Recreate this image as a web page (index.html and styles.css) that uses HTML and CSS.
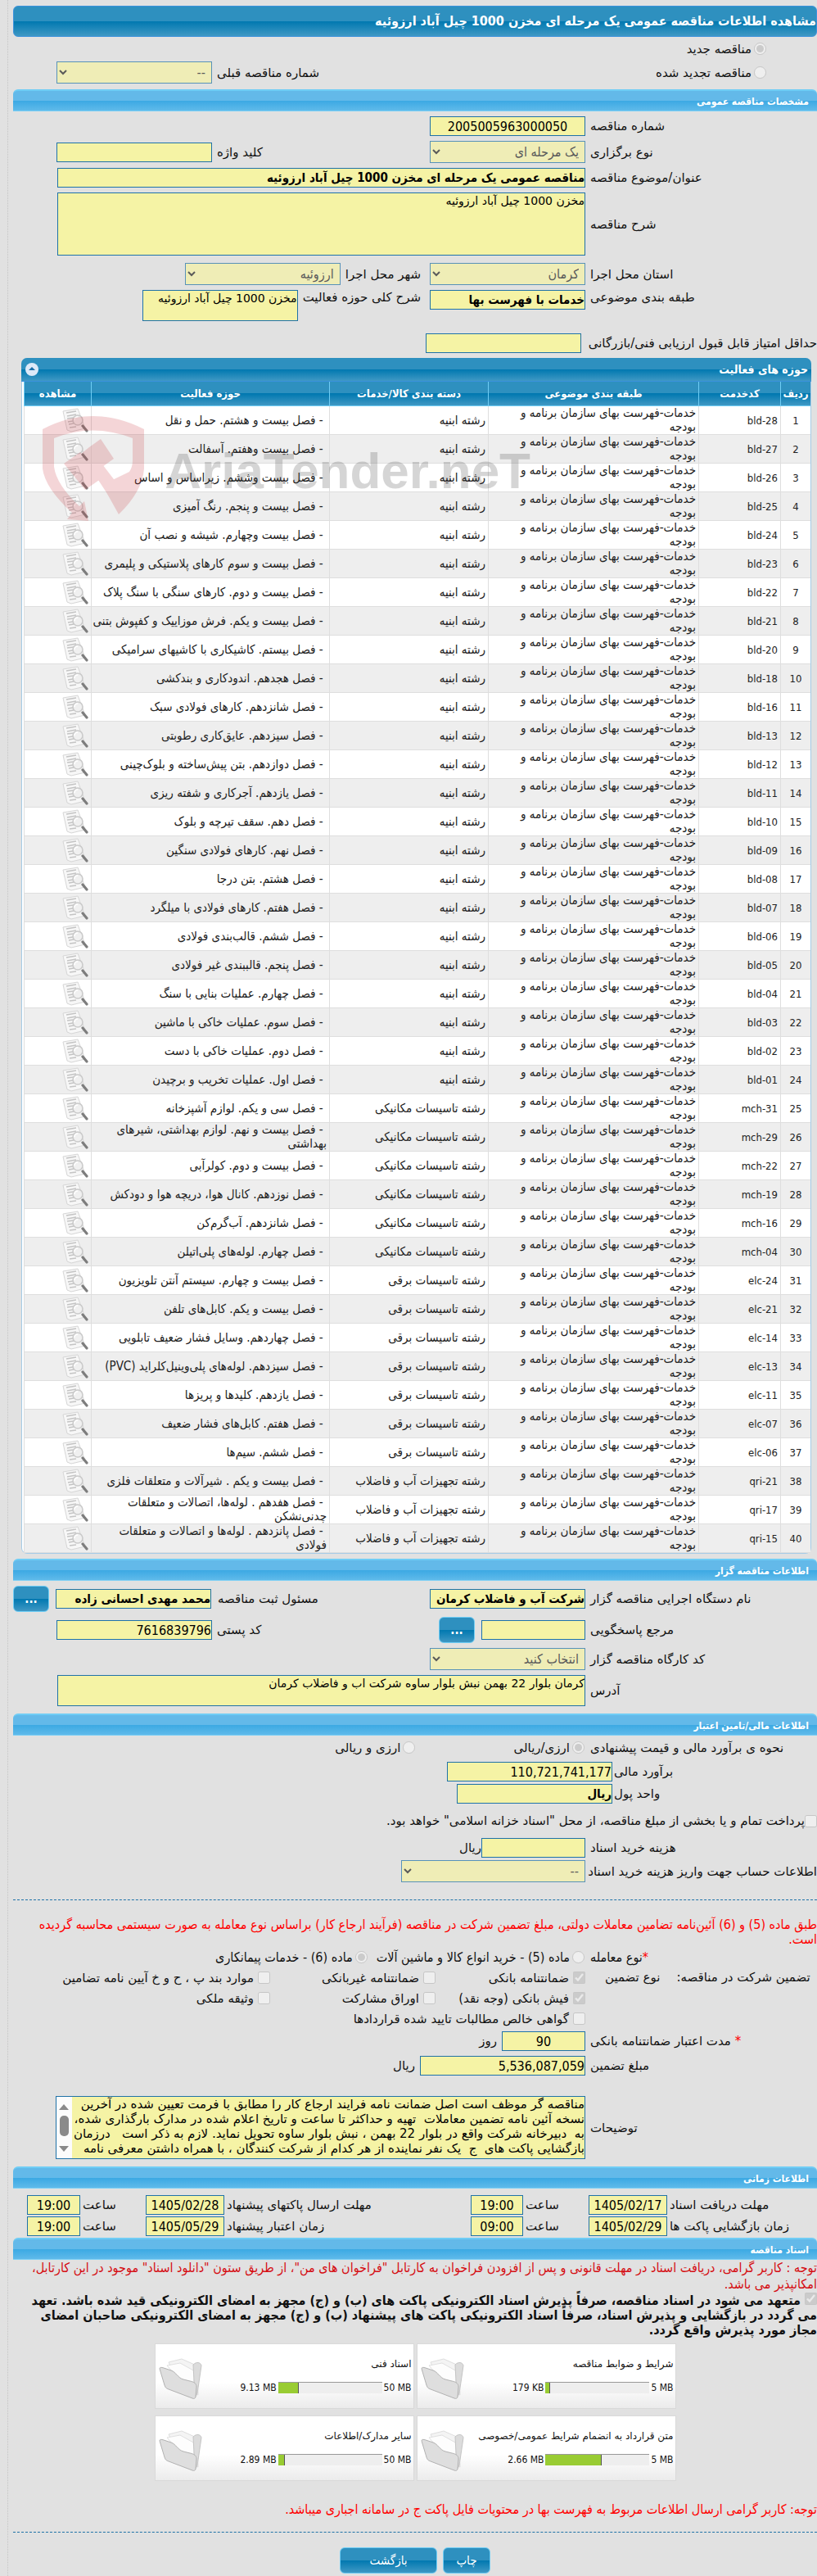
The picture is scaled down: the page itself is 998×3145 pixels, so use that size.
FILE: index.html
```html
<!DOCTYPE html>
<html lang="fa" dir="rtl">
<head>
  <meta charset="utf-8">
  <title>مشاهده اطلاعات مناقصه عمومی</title>
  <link rel="stylesheet" href="styles.css">
</head>
<body>
  <svg class="sprites" aria-hidden="true">
    <symbol id="icon-view" viewBox="0 0 32 30">
      <path d="M1 4 L19 1 L28 25 L11 29 L6 27 Z" fill="#f7f7f7" stroke="#d6d6d6" stroke-width="1"/>
      <path d="M5 6l12-2M6 10l11-2M6 13l8-1M7 17l6-1M8 20l6-1M9 24l8-1" stroke="#c4c4c4" stroke-width="1.3" fill="none"/>
      <circle cx="19" cy="15" r="6" fill="#eeeeee" fill-opacity=".85" stroke="#cacaca" stroke-width="1.6"/>
      <path d="M15 15a4 4 0 0 1 4-4" stroke="#fff" stroke-width="1.5" fill="none"/>
      <path d="M25 22l5 6" stroke="#7d7d7d" stroke-width="3.2" stroke-linecap="round"/>
    </symbol>
    <symbol id="icon-folder" viewBox="0 0 54 50">
      <path d="M12 5l16-4 18 8 2 36-20-4z" fill="#f4f4f4" stroke="#dedede"/>
      <path d="M10 9l16-3 18 10-2 30z" fill="#fdfdfd" stroke="#e0e0e0"/>
      <path d="M42 8c4-4 9-3 10 1l-5 34-3 5z" fill="#dcdcdc" stroke="#c4c4c4"/>
      <path d="M1 13c0-2 2-2 5-1l9 3c6 2 8 9 15 11l8 2c5 1 8 3 8 7l-1 12c0 2-2 3-4 2L12 38c-3-1-4-2-5-5z" fill="#dedede" stroke="#b2b2b2"/>
    </symbol>
  </svg>

  <main class="page">
    <h1 class="page-title">مشاهده اطلاعات مناقصه عمومی یک مرحله ای مخزن 1000 چیل آباد ارزوئیه</h1>

    <div class="row kind-row">
      <input type="radio" id="kind-new" name="kind" checked disabled><label for="kind-new">مناقصه جدید</label>
    </div>
    <div class="row kind-row">
      <input type="radio" id="kind-again" name="kind" disabled><label for="kind-again">مناقصه تجدید شده</label>
      <div class="end-group">
        <label for="prev-no">شماره مناقصه قبلی</label>
        <select id="prev-no" disabled><option>--</option></select>
      </div>
    </div>

    <h2 class="section-title">مشخصات مناقصه عمومی</h2>
    <div class="form">
      <div class="row">
        <label class="main-label" for="tender-no">شماره مناقصه</label>
        <input class="center" type="text" id="tender-no" value="2005005963000050" readonly>
      </div>
      <div class="row">
        <label class="main-label" for="hold-type">نوع برگزاری</label>
        <select id="hold-type" disabled><option>یک مرحله ای</option></select>
        <div class="end-group">
          <label for="keyword">کلید واژه</label>
          <input type="text" id="keyword" readonly>
        </div>
      </div>
      <div class="row">
        <label class="main-label" for="subject">عنوان/موضوع مناقصه</label>
        <input class="wide bold" type="text" id="subject" value="مناقصه عمومی یک مرحله ای مخزن 1000 چیل آباد ارزوئیه" readonly>
      </div>
      <div class="row">
        <label class="main-label" for="about">شرح مناقصه</label>
        <textarea class="wide tall" id="about" readonly>مخزن 1000 چیل آباد ارزوئیه</textarea>
      </div>
      <div class="row place-row">
        <label class="main-label" for="province">استان محل اجرا</label>
        <select id="province" disabled><option>کرمان</option></select>
        <label class="next-label" for="city">شهر محل اجرا</label>
        <select id="city" disabled><option>ارزوئیه</option></select>
      </div>
      <div class="row top">
        <label class="main-label" for="category">طبقه بندی موضوعی</label>
        <input class="bold" type="text" id="category" value="خدمات با فهرست بها" readonly>
        <label class="next-label" for="scope">شرح کلی حوزه فعالیت</label>
        <textarea id="scope" readonly>مخزن 1000 چیل آباد ارزوئیه</textarea>
      </div>
      <div class="row score-row">
        <label class="main-label" for="score">حداقل امتیاز قابل قبول ارزیابی فنی/بازرگانی</label>
        <input type="text" id="score" readonly>
      </div>
    </div>

    <section class="grid-panel">
      <div class="grid-title">
        <span>حوزه های فعالیت</span>
        <button type="button" class="collapse" aria-label="بستن"><svg viewBox="0 0 16 16"><circle cx="8" cy="8" r="8" fill="#dce9f8"/><path d="M4 9l4-4 4 4z" fill="#1b6fa8"/></svg></button>
      </div>
      <table class="grid">
        <thead>
          <tr>
            <th class="col-no">ردیف</th>
            <th class="col-code">کدخدمت</th>
            <th class="col-cat">طبقه بندی موضوعی</th>
            <th class="col-group">دسته بندی کالا/خدمات</th>
            <th class="col-scope">حوزه فعالیت</th>
            <th class="col-view">مشاهده</th>
          </tr>
        </thead>
        <tbody id="grid-body"></tbody>
      </table>
      <svg class="watermark" viewBox="0 0 620 150" aria-hidden="true">
        <path fill="#c9343c" fill-rule="evenodd" d="M5 24 Q66 -8 129 24 V72 Q127 100 98 128 L78 92 L111 76 Q115 70 115 62 V35 Q66 16 19 35 V70 Q22 92 50 118 L56 112 L61 136 L35 134 L41 126 Q8 96 5 72 Z"/>
        <path fill="#c9343c" d="M31 66l20-14 26 32-20 14zM62 46l14-10 16 24-14 10zM52 54l10-8 46 60-10 18z"/>
        <text x="601" y="96" text-anchor="start">AriaTender.neT</text>
      </svg>
    </section>

    <h2 class="section-title">اطلاعات مناقصه گزار</h2>
    <div class="form">
      <div class="row">
        <label class="main-label" for="org">نام دستگاه اجرایی مناقصه گزار</label>
        <input class="bold" type="text" id="org" value="شرکت آب و فاضلاب کرمان" readonly>
        <div class="end-group with-button">
          <label for="registrar">مسئول ثبت مناقصه</label>
          <input class="bold" type="text" id="registrar" value="محمد مهدی احسانی زاده" readonly>
          <button type="button" class="btn more">...</button>
        </div>
      </div>
      <div class="row">
        <label class="main-label" for="contact">مرجع پاسخگویی</label>
        <input class="short" type="text" id="contact" readonly>
        <button type="button" class="btn more">...</button>
        <div class="end-group">
          <label for="postal">کد پستی</label>
          <input type="text" id="postal" value="7616839796" readonly>
        </div>
      </div>
      <div class="row">
        <label class="main-label" for="workshop">کد کارگاه مناقصه گزار</label>
        <select id="workshop" disabled><option>انتخاب کنید</option></select>
      </div>
      <div class="row">
        <label class="main-label" for="address">آدرس</label>
        <textarea class="wide" id="address" readonly>کرمان بلوار 22 بهمن نبش بلوار ساوه شرکت اب و فاضلاب کرمان</textarea>
      </div>
    </div>

    <h2 class="section-title money-title">اطلاعات مالی/تامین اعتبار</h2>
    <div class="row radio-row">
      <span class="main-label">نحوه ی برآورد مالی و قیمت پیشنهادی</span>
      <input type="radio" id="cur-one" name="currency" checked disabled><label for="cur-one">ارزی/ریالی</label>
      <input type="radio" id="cur-both" name="currency" class="far" disabled><label for="cur-both">ارزی و ریالی</label>
    </div>
    <div class="form money">
      <div class="row">
        <label class="money-label" for="estimate">برآورد مالی</label>
        <input class="amount" type="text" id="estimate" value="110,721,741,177" readonly>
      </div>
      <div class="row">
        <label class="money-label" for="unit">واحد پول</label>
        <input class="bold" type="text" id="unit" value="ریال" readonly>
      </div>
      <div class="row bond-row">
        <input type="checkbox" id="bond" disabled><label for="bond">پرداخت تمام و یا بخشی از مبلغ مناقصه، از محل "اسناد خزانه اسلامی" خواهد بود.</label>
      </div>
      <div class="row">
        <label class="main-label" for="doc-cost">هزینه خرید اسناد</label>
        <input class="short" type="text" id="doc-cost" readonly><span>ریال</span>
      </div>
      <div class="row">
        <label class="main-label" for="account">اطلاعات حساب جهت واریز هزینه خرید اسناد</label>
        <select class="account" id="account" disabled><option>--</option></select>
      </div>
    </div>

    <hr class="dashed">

    <p class="notice">طبق ماده (5) و (6) آئین‌نامه تضامین معاملات دولتی، مبلغ تضمین شرکت در مناقصه (فرآیند ارجاع کار) براساس نوع معامله به صورت سیستمی محاسبه گردیده است.</p>
    <div class="row deal-row">
      <span class="main-label"><b class="star">*</b>نوع معامله</span>
      <input type="radio" id="deal-5" name="deal" disabled><label class="opt" for="deal-5">ماده (5) - خرید انواع کالا و ماشین آلات</label>
      <input type="radio" id="deal-6" name="deal" checked disabled><label for="deal-6">ماده (6) - خدمات پیمانکاری</label>
    </div>
    <div class="guarantee">
      <div class="guarantee-label"><span>تضمین شرکت در مناقصه:</span><span>نوع تضمین</span></div>
      <div class="checks">
        <div class="check"><input type="checkbox" id="g1" checked disabled><label for="g1">ضمانتنامه بانکی</label></div>
        <div class="check"><input type="checkbox" id="g2" disabled><label for="g2">ضمانتنامه غیربانکی</label></div>
        <div class="check"><input type="checkbox" id="g3" disabled><label for="g3">موارد بند پ ، ح و خ آیین نامه تضامین</label></div>
        <div class="check"><input type="checkbox" id="g4" checked disabled><label for="g4">فیش بانکی (وجه نقد)</label></div>
        <div class="check"><input type="checkbox" id="g5" disabled><label for="g5">اوراق مشارکت</label></div>
        <div class="check"><input type="checkbox" id="g6" disabled><label for="g6">وثیقه ملکی</label></div>
        <div class="check last"><input type="checkbox" id="g7" disabled><label for="g7">گواهی خالص مطالبات تایید شده قراردادها</label></div>
      </div>
    </div>
    <div class="form bank">
      <div class="row">
        <label class="main-label" for="days"><b class="star">*</b> مدت اعتبار ضمانتنامه بانکی</label>
        <input class="days center" type="text" id="days" value="90" readonly><span class="suffix">روز</span>
      </div>
      <div class="row">
        <label class="main-label" for="bail">مبلغ تضمین</label>
        <input class="amount" type="text" id="bail" value="5,536,087,059" readonly><span class="suffix">ریال</span>
      </div>
      <div class="row notes-row">
        <label class="main-label" for="notes">توضیحات</label>
        <div class="notes">
          <textarea id="notes" readonly>مناقصه گر موظف است اصل ضمانت نامه فرایند ارجاع کار را مطابق با فرمت تعیین شده در آخرین
نسخه آئین نامه تضمین معاملات  تهیه و حداکثر تا ساعت و تاریخ اعلام شده در مدارک بارگذاری شده،
به  دبیرخانه شرکت واقع در بلوار 22 بهمن ، نبش بلوار ساوه تحویل نماید. لازم به ذکر است   درزمان
بازگشایی پاکت های  ج  یک نفر نماینده از هر کدام از شرکت کنندگان ، با همراه داشتن معرفی نامه</textarea>
          <svg class="scrollbar" viewBox="0 0 19 75" aria-hidden="true">
            <path d="M9 9l6 7H3zM9 67l6-7H3z" fill="#8a8a8a"/>
            <rect x="4" y="23" width="11" height="25" rx="5" fill="#8a8a8a"/>
          </svg>
        </div>
      </div>
    </div>

    <h2 class="section-title">اطلاعات زمانی</h2>
    <div class="times">
      <label class="time-label" for="t1">مهلت دریافت اسناد</label><input class="center" type="text" id="t1" value="1405/02/17" readonly>
      <label class="time-label" for="t2">ساعت</label><input class="center" type="text" id="t2" value="19:00" readonly>
      <label class="time-label" for="t3">مهلت ارسال پاکتهای پیشنهاد</label><input class="center" type="text" id="t3" value="1405/02/28" readonly>
      <label class="time-label" for="t4">ساعت</label><input class="center" type="text" id="t4" value="19:00" readonly>
      <label class="time-label" for="t5">زمان بازگشایی پاکت ها</label><input class="center" type="text" id="t5" value="1405/02/29" readonly>
      <label class="time-label" for="t6">ساعت</label><input class="center" type="text" id="t6" value="09:00" readonly>
      <label class="time-label" for="t7">زمان اعتبار پیشنهاد</label><input class="center" type="text" id="t7" value="1405/05/29" readonly>
      <label class="time-label" for="t8">ساعت</label><input class="center" type="text" id="t8" value="19:00" readonly>
    </div>

    <h2 class="section-title">اسناد مناقصه</h2>
    <p class="notice dark">توجه : کاربر گرامی، دریافت اسناد در مهلت قانونی و پس از افزودن فراخوان به کارتابل "فراخوان های من"، از طریق ستون "دانلود اسناد" موجود در این کارتابل، امکانپذیر می باشد.</p>
    <p class="pledge"><input type="checkbox" id="pledge" checked disabled> <label for="pledge">متعهد می شود در اسناد مناقصه، صرفاً پذیرش اسناد الکترونیکی پاکت های (ب) و (ج) مجهز به امضای الکترونیکی قید شده باشد. تعهد می گردد در بازگشایی و پذیرش اسناد، صرفاً اسناد الکترونیکی پاکت های پیشنهاد (ب) و (ج) مجهز به امضای الکترونیکی صاحبان امضای مجاز مورد پذیرش واقع گردد.</label></p>

    <div class="files" id="files"></div>

    <p class="notice last-notice">توجه: کاربر گرامی ارسال اطلاعات مربوط به فهرست بها در محتویات فایل پاکت ج در سامانه اجباری میباشد.</p>
    <hr class="dashed">
    <div class="actions">
      <button type="button" class="btn print">چاپ</button>
      <button type="button" class="btn back">بازگشت</button>
    </div>
  </main>

  <script>
    const groups = {
      bld: 'رشته ابنیه',
      mch: 'رشته تاسیسات مکانیکی',
      elc: 'رشته تاسیسات برقی',
      qri: 'رشته تجهیزات آب و فاضلاب'
    };

    const items = [
      ['bld-28', 'فصل بیست و هشتم. حمل و نقل'],
      ['bld-27', 'فصل بیست وهفتم. آسفالت'],
      ['bld-26', 'فصل بیست وششم. زیراساس و اساس'],
      ['bld-25', 'فصل بیست و پنجم. رنگ آمیزی'],
      ['bld-24', 'فصل بیست وچهارم. شیشه و نصب آن'],
      ['bld-23', 'فصل بیست و سوم کارهای پلاستیکی و پلیمری'],
      ['bld-22', 'فصل بیست و دوم. کارهای سنگی با سنگ پلاک'],
      ['bld-21', 'فصل بیست و یکم. فرش موزاییک و کفپوش بتنی'],
      ['bld-20', 'فصل بیستم. کاشیکاری با کاشیهای سرامیکی'],
      ['bld-18', 'فصل هجدهم. اندودکاری و بندکشی'],
      ['bld-16', 'فصل شانزدهم. کارهای فولادی سبک'],
      ['bld-13', 'فصل سیزدهم. عایق‌کاری رطوبتی'],
      ['bld-12', 'فصل دوازدهم. بتن پیش‌ساخته و بلوک‌چینی'],
      ['bld-11', 'فصل یازدهم. آجرکاری و شفته ریزی'],
      ['bld-10', 'فصل دهم. سقف تیرچه و بلوک'],
      ['bld-09', 'فصل نهم. کارهای فولادی سنگین'],
      ['bld-08', 'فصل هشتم. بتن درجا'],
      ['bld-07', 'فصل هفتم. کارهای فولادی با میلگرد'],
      ['bld-06', 'فصل ششم. قالب‌بندی فولادی'],
      ['bld-05', 'فصل پنجم. قالببندی غیر فولادی'],
      ['bld-04', 'فصل چهارم. عملیات بنایی با سنگ'],
      ['bld-03', 'فصل سوم. عملیات خاکی با ماشین'],
      ['bld-02', 'فصل دوم. عملیات خاکی با دست'],
      ['bld-01', 'فصل اول. عملیات تخریب و برچیدن'],
      ['mch-31', 'فصل سی و یکم. لوازم آشپزخانه'],
      ['mch-29', 'فصل بیست و نهم. لوازم بهداشتی، شیرهای بهداشتی'],
      ['mch-22', 'فصل بیست و دوم. کولرآبی'],
      ['mch-19', 'فصل نوزدهم. کانال هوا، دریچه هوا و دودکش'],
      ['mch-16', 'فصل شانزدهم. آب‌گرم‌کن'],
      ['mch-04', 'فصل چهارم. لوله‌های پلی‌اتیلن'],
      ['elc-24', 'فصل بیست و چهارم. سیستم آنتن تلویزیون'],
      ['elc-21', 'فصل بیست و یکم. کابل‌های تلفن'],
      ['elc-14', 'فصل چهاردهم. وسایل فشار ضعیف تابلویی'],
      ['elc-13', 'فصل سیزدهم. لوله‌های پلی‌وینیل‌کلراید (PVC)'],
      ['elc-11', 'فصل یازدهم. کلیدها و پریزها'],
      ['elc-07', 'فصل هفتم. کابل‌های فشار ضعیف'],
      ['elc-06', 'فصل ششم. سیم‌ها'],
      ['qri-21', 'فصل بیست و یکم . شیرآلات و متعلقات فلزی'],
      ['qri-17', 'فصل هفدهم . لوله‌ها، اتصالات و متعلقات چدنی‌نشکن'],
      ['qri-15', 'فصل پانزدهم . لوله‌ها و اتصالات و متعلقات فولادی']
    ];

    document.getElementById('grid-body').innerHTML = items.map(([code, title], i) => `
      <tr>
        <td class="num">${i + 1}</td>
        <td class="code"><bdi>${code}</bdi></td>
        <td class="cat">خدمات-فهرست بهای سازمان برنامه و بودجه</td>
        <td>${groups[code.slice(0, 3)]}</td>
        <td class="scope">&nbsp;- ${title}</td>
        <td><a href="#" aria-label="مشاهده"><svg class="view"><use href="#icon-view"/></svg></a></td>
      </tr>`).join('');

    const files = [
      ['شرایط و ضوابط مناقصه', '5 MB', '179 KB', 4],
      ['اسناد فنی', '50 MB', '9.13 MB', 20],
      ['متن قرارداد به انضمام شرایط عمومی/خصوصی', '5 MB', '2.66 MB', 54],
      ['سایر مدارک/اطلاعات', '50 MB', '2.89 MB', 7]
    ];

    document.getElementById('files').innerHTML = files.map(([name, max, used, percent]) => `
      <div class="file">
        <div class="file-info">
          <span>${name}</span>
          <div class="usage"><bdi>${max}</bdi><div class="bar"><div class="fill" style="width: ${percent}%"></div></div><bdi>${used}</bdi></div>
        </div>
        <svg class="folder"><use href="#icon-folder"/></svg>
      </div>`).join('');
  </script>
</body>
</html>
```
FILE: styles.css
```css
* {
  box-sizing: border-box;
}

body {
  margin: 0;
  background-color: #e1e1e1;
  color: #111;
  font-family: "DejaVu Sans", sans-serif;
  font-size: 15px;
  overflow-x: hidden;
}

.sprites {
  display: none;
}

.page {
  margin-left: 9px;
  padding: 7px 0 7px 6px;
  border-left: 1px dotted #c4c4c4;
}

.page-title,
.section-title,
.grid-panel,
.notice,
.pledge,
.deal-row,
.btn {
  font-family: "DejaVu Sans Condensed", "DejaVu Sans", sans-serif;
}

.page-title {
  margin: 0;
  height: 38px;
  line-height: 36px;
  border: 1px solid #3b92dc;
  border-radius: 6px;
  background: linear-gradient(#2e90bf 50%, #0078b0 50%, #3f98c4);
  color: white;
  font-size: 16px;
  white-space: nowrap;
}

.section-title {
  margin: 0;
  height: 27px;
  line-height: 26px;
  padding-right: 10px;
  border-top: 2px solid #6fcdf5;
  border-bottom: 1px solid #7fd0f5;
  border-radius: 6px 6px 0 0;
  background: linear-gradient(#63b9e9 48%, #3aa8e3 48%, #5fbaea);
  color: white;
  font-size: 12px;
}

.row {
  display: flex;
  align-items: center;
}

.row.top {
  align-items: flex-start;
}

.kind-row {
  height: 29px;
  padding-right: 62px;
}

.kind-row + .section-title {
  margin-top: 6px;
}

.form {
  display: flex;
  flex-direction: column;
  gap: 6px;
  padding: 6px 0;
}

.main-label {
  width: 277px;
  margin-left: 6px;
  flex-shrink: 0;
  text-align: left;
  white-space: nowrap;
}

.next-label {
  margin: 0 11px 0 6px;
}

.end-group {
  display: flex;
  align-items: center;
  gap: 6px;
  margin-right: auto;
  margin-left: 53px;
}

.end-group.with-button {
  gap: 8px;
  margin-left: 0;
}

input[type="text"],
select,
textarea {
  width: 190px;
  height: 24px;
  margin: 0;
  padding: 0;
  border: 1px solid #1f72a8;
  border-radius: 0;
  background-color: #f5f3a5;
  color: #000;
  font-family: "DejaVu Sans Condensed", "DejaVu Sans", sans-serif;
  font-size: 16px;
  outline: none;
}

select {
  height: 27px;
  padding: 0 3px;
}

select:disabled {
  color: #222;
  opacity: .7;
}

textarea {
  height: 38px;
  font-family: inherit;
  font-size: 14px;
  line-height: 18px;
  resize: none;
  overflow: hidden;
  display: block;
}

textarea.tall {
  height: 77px;
}

input.wide,
textarea.wide {
  flex: 1;
  margin-left: 54px;
}

input[type="text"].bold {
  font-size: 15px;
  font-weight: bold;
}

input.center {
  text-align: center;
}

input[type="text"].short {
  width: 127px;
}

input[type="text"].amount {
  width: 202px;
}

input[type="text"].days {
  width: 102px;
}

.short + .btn {
  margin-right: 8px;
}

input[type="radio"],
input[type="checkbox"] {
  width: 15px;
  height: 15px;
  margin: 0 0 0 3px;
  flex-shrink: 0;
}

.place-row {
  margin-top: 3px;
}

.score-row {
  margin-top: 9px;
}

.score-row input[type="text"] {
  margin-right: 5px;
}

/* activity table */
.grid-panel {
  position: relative;
  margin: 0 7px 6px 10px;
  border: 1px solid #a5cbe6;
  border-radius: 7px;
  background-color: white;
  padding-left: 2px;
}

.grid-title {
  display: flex;
  justify-content: space-between;
  align-items: center;
  height: 29px;
  margin: -1px -1px 0 -3px;
  padding: 0 4px 0 5px;
  border-bottom: 1px solid #3b92dc;
  border-radius: 7px 7px 0 0;
  background: linear-gradient(#2e90bf 50%, #0078b0 50%, #3f98c4);
  color: white;
  font-size: 14px;
  font-weight: bold;
}

.collapse {
  width: 16px;
  height: 16px;
  padding: 0;
  border: none;
  background: none;
}

.collapse svg {
  display: block;
}

.grid {
  width: 100%;
  border-collapse: separate;
  border-spacing: 0;
  table-layout: fixed;
  color: #222;
}

.grid th {
  height: 30px;
  padding: 0;
  border-left: 1px solid #6fcdf5;
  border-bottom: 1px solid #6fcdf5;
  background: linear-gradient(#2e90bf 50%, #0078b0 50%, #3f98c4);
  color: white;
  font-size: 13px;
}

.grid td {
  height: 35px;
  padding: 0 3px;
  border-left: 1px solid #dedede;
  border-bottom: 1px solid #dedede;
  font-size: 15px;
  line-height: 17px;
}

.grid tbody tr:nth-child(even) {
  background-color: #eee;
}

.grid .num,
.grid .code {
  font-size: 13px;
}

.grid .num {
  padding: 0;
  text-align: center;
}

.grid .cat {
  padding-left: 20px;
}

.grid .scope {
  padding-left: 1px;
}

.col-no { width: 37px; }
.col-code { width: 100px; }
.col-cat { width: 257px; }
.col-group { width: 194px; }
.col-view { width: 82px; }

.view {
  display: block;
  width: 32px;
  height: 30px;
}

.watermark {
  position: absolute;
  top: 62px;
  left: 20px;
  width: 620px;
  height: 150px;
  opacity: .2;
  pointer-events: none;
}

.watermark text {
  fill: #333;
  font-family: "Liberation Sans", sans-serif;
  font-size: 62px;
  font-weight: bold;
}

.btn {
  height: 32px;
  border: 1px solid #6fcdf5;
  border-radius: 6px;
  background: linear-gradient(#2e90bf 50%, #0078b0 50%, #3f98c4);
  color: white;
  font-size: 15px;
  cursor: pointer;
}

.btn.more {
  width: 44px;
  padding: 0;
  font-weight: bold;
}

/* money */
.money-title {
  margin-top: 3px;
}

.radio-row {
  height: 29px;
}

.opt {
  margin-left: 10px;
}

.radio-row input,
.deal-row input {
  margin-right: 1px;
}

.radio-row .far {
  margin-right: 120px;
}

.form.money {
  gap: 3px;
  padding: 3px 0 0;
}

.money-label {
  width: 248px;
  margin-left: 2px;
  text-align: left;
}

.bond-row {
  margin: 6px 0;
  height: 24px;
}

.bond-row input {
  margin-left: 0;
}

select.account {
  width: 225px;
}

.dashed {
  margin: 21px 0;
  border: none;
  border-top: 1px dashed #1f72a8;
}

.notice {
  margin: 0;
  color: #f00;
  font-size: 16px;
  line-height: 18px;
}

.notice.dark {
  color: #d50d12;
  line-height: 20px;
}

.deal-row {
  height: 25px;
  font-size: 16px;
}

.star {
  color: #f00;
  font-weight: normal;
}

.guarantee {
  display: flex;
}

.guarantee-label {
  display: flex;
  gap: 20px;
  justify-content: flex-end;
  width: 283px;
  padding-left: 24px;
  line-height: 25px;
  white-space: nowrap;
}

.checks {
  flex: 1;
  display: grid;
  grid-template-columns: 183px 202px auto;
  grid-auto-rows: 25px;
}

.check {
  display: flex;
  align-items: center;
  white-space: nowrap;
}

.check.last {
  grid-column: span 3;
}

.check input {
  margin-left: 5px;
}

.form.bank {
  padding: 3px 0 9px;
}

.suffix {
  margin-right: 6px;
}

.notes-row {
  margin-top: 19px;
}

.notes {
  flex: 1;
  display: flex;
  height: 77px;
  margin-left: 52px;
  border: 1px solid #1f72a8;
}

.notes textarea {
  flex: 1;
  width: auto;
  height: 75px;
  border: none;
  font-size: 15px;
  white-space: pre;
}

.scrollbar {
  width: 19px;
  height: 75px;
  background-color: #fcfcfc;
}

.times {
  display: grid;
  grid-template-columns: 1fr 96px 80px 64px 301px 96px 80px 65px;
  row-gap: 2px;
  align-items: center;
  padding: 8px 0 2px 17px;
}

.times input[type="text"] {
  width: 100%;
}

.time-label {
  padding-left: 3px;
  text-align: left;
}

.pledge {
  margin: 0;
  font-size: 16px;
  font-weight: bold;
  line-height: 18px;
}

.pledge input {
  margin: 0;
}

.files {
  display: grid;
  grid-template-columns: 317px 317px;
  gap: 8px 3px;
  justify-content: center;
  padding: 7px 0 26px;
}

.file {
  display: flex;
  justify-content: space-between;
  height: 80px;
  padding: 17px 2px 0 4px;
  border: 1px solid #d9d9d9;
  background: linear-gradient(#fff 60%, #ebebeb);
  font-size: 12px;
}

.file-info {
  display: flex;
  flex-direction: column;
  gap: 15px;
}

.usage {
  display: flex;
  align-items: center;
  gap: 2px;
  font-family: "DejaVu Sans Condensed", "DejaVu Sans", sans-serif;
}

.bar {
  width: 127px;
  height: 14px;
  border-top: 1px solid #999;
  background-color: #eee;
  direction: ltr;
}

.fill {
  height: 13px;
  border-right: 1px solid #555;
  background-color: #9c3;
}

.folder {
  width: 54px;
  height: 50px;
}

.last-notice + .dashed {
  margin: 18px 0;
}

.actions {
  display: flex;
  justify-content: center;
  gap: 7px;
}

.btn.print {
  width: 58px;
}

.btn.back {
  width: 119px;
}
```
